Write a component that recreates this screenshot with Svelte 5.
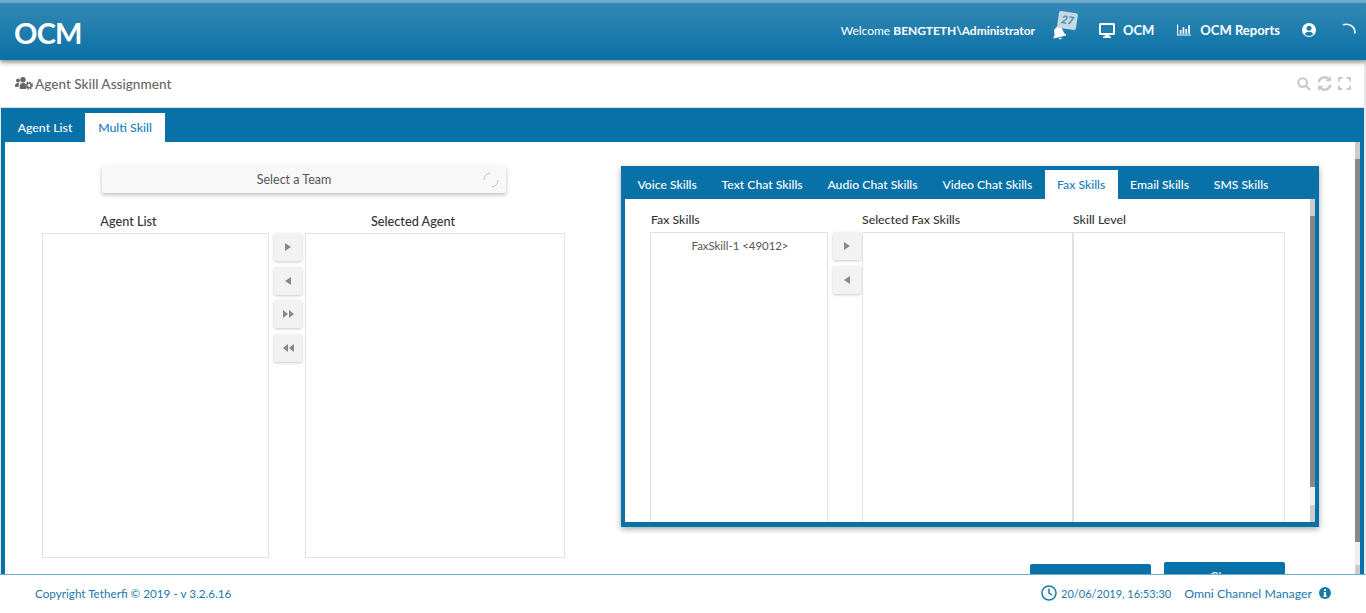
<script>
	const skill_tabs = ['Voice Skills', 'Text Chat Skills', 'Audio Chat Skills', 'Video Chat Skills', 'Fax Skills', 'Email Skills', 'SMS Skills'];
	let active_skill = $state('Fax Skills');
	let active_tab = $state('Multi Skill');

	const arrows = {
		right: 'M2 1l6 4-6 4z',
		left: 'M8 1L2 5l6 4z',
		all_right: 'M0 1l5 4-5 4zM6 1l5 4-5 4z',
		all_left: 'M5 1L0 5l5 4zM11 1L6 5l5 4z'
	};
</script>

<div class="page">
	<header class="topbar">
		<div class="logo">OCM</div>
		<nav class="top-nav">
			<span class="welcome">Welcome <b>BENGTETH\Administrator</b></span>
			<span class="bell">
				<svg width="14" height="14" viewBox="0 0 14 14" fill="#fff"><g transform="rotate(-14 7 7)"><path d="M7 0a1 1 0 0 1 1 1c2.400.4 3.500 2.300 3.500 4.500 0 2.500.8 3.500 2 4.500v1H.5v-1c1.200-1 2-2 2-4.500C2.500 3.300 3.600 1.400 6 1a1 1 0 0 1 1-1zM5.500 12h3a1.500 1.500 0 0 1-3 0z"/></g></svg>
				<span class="badge">27</span>
			</span>
			<span class="nav-item monitor">
				<svg width="16" height="15" viewBox="0 0 16 15" fill="#fff"><path d="M1.500 0h13A1.500 1.500 0 0 1 16 1.500v9a1.500 1.500 0 0 1-1.500 1.500H10l.5 1.500h1.500V15H4v-1.500h1.500L6 12H1.500A1.500 1.500 0 0 1 0 10.500v-9A1.500 1.500 0 0 1 1.500 0zM2 2v8h12V2z"/></svg>
				OCM
			</span>
			<span class="nav-item reports">
				<svg width="14" height="12" viewBox="0 0 15 12" fill="#fff"><path d="M0 0h1.200v10.800H15V12H0zM3 6h1.800v4H3zM6 3h1.800v7H6zM9 5h1.800v5H9zM12 1h1.800v9H12z"/></svg>
				OCM Reports
			</span>
			<svg class="user" width="14" height="14" viewBox="0 0 14 14"><circle cx="7" cy="7" r="7" fill="#fff"/><circle cx="7" cy="5.300" r="2.500" fill="#1a7dae"/><path d="M2.800 11.200c.8-1.800 2.400-2.500 4.200-2.500s3.400.7 4.200 2.500A6 6 0 0 1 7 13a6 6 0 0 1-4.200-1.800z" fill="#1a7dae"/></svg>
			<svg class="loader" width="14" height="14" viewBox="0 0 14 14" fill="none" stroke="#fff" stroke-width="1.600"><path d="M1 1.800C6.500 0 13.500 3 12.800 10.500"/></svg>
		</nav>
	</header>

	<div class="title-bar">
		<h1>
			<svg width="18" height="13" viewBox="0 0 18 13" fill="#666"><circle cx="3" cy="3.500" r="1.900"/><circle cx="8" cy="2.800" r="2.700"/><path d="M0 9c0-2 1-3 3-3 .8 0 1.200.2 1.600.5C3.800 7.500 3.500 8.500 3.500 10H1C.4 10 0 9.600 0 9zM4.500 11c0-3 1-5 3.500-5 1.200 0 2 .4 2.600 1.100-.2 1.500.1 3.100 1 4.700-.4.100-.9.200-1.600.2H6c-1 0-1.500-.4-1.500-1z"/><circle cx="14" cy="8.500" r="2.200" fill="none" stroke="#666" stroke-width="1.600"/><circle cx="14" cy="8.500" r="3.500" fill="none" stroke="#666" stroke-width="1.300" stroke-dasharray="1.400 1.350"/></svg>
			Agent Skill Assignment
		</h1>
		<div class="tools">
			<svg width="14" height="14" viewBox="0 0 13 13" fill="none" stroke="#c8c8c8" stroke-width="2"><circle cx="5.200" cy="5.200" r="4"/><path d="M8.200 8.200L12 12"/></svg>
			<svg width="15" height="15" viewBox="0 0 14 14" fill="none" stroke="#c8c8c8" stroke-width="2.200"><path d="M1.500 6a5.500 5.500 0 0 1 9.500-3M12.500 8a5.500 5.500 0 0 1-9.500 3"/><path d="M13 0v5H8zM1 14V9h5z" fill="#c8c8c8" stroke="none"/></svg>
			<svg width="13" height="13" viewBox="0 0 12 12" fill="none" stroke="#c8c8c8" stroke-width="1.800"><path d="M.9 4V.9H4M8 .9h3.100V4M11.100 8v3.100H8M4 11.100H.9V8"/></svg>
		</div>
	</div>

	<main class="panel">
		<div class="tabs">
			{#each ['Agent List', 'Multi Skill'] as tab}
				<button class="tab" class:active={active_tab === tab} onclick={() => (active_tab = tab)}>{tab}</button>
			{/each}
		</div>
		<div class="panel-body">
			<div class="content">
				<section class="left">
					<div class="team-select">
						Select a Team
						<svg class="spin" width="16" height="16" viewBox="0 0 16 16" fill="none" stroke-width="1"><path d="M1 8a7 7 0 0 1 6-7" stroke="#bbb"/><path d="M15 8a7 7 0 0 1-6 7" stroke="#9cc8e0"/></svg>
					</div>
					<div class="picker">
						<div class="col agents">
							<div class="label">Agent List</div>
							<div class="listbox"></div>
						</div>
						<div class="moves">
							<button class="move" aria-label="Add"><svg width="10" height="10" viewBox="0 0 10 10" fill="#888"><path d={arrows.right}/></svg></button>
							<button class="move" aria-label="Remove"><svg width="10" height="10" viewBox="0 0 10 10" fill="#888"><path d={arrows.left}/></svg></button>
							<button class="move" aria-label="Add all"><svg width="11" height="10" viewBox="0 0 11 10" fill="#888"><path d={arrows.all_right}/></svg></button>
							<button class="move" aria-label="Remove all"><svg width="11" height="10" viewBox="0 0 11 10" fill="#888"><path d={arrows.all_left}/></svg></button>
						</div>
						<div class="col selected">
							<div class="label">Selected Agent</div>
							<div class="listbox"></div>
						</div>
					</div>
				</section>

				<section class="right">
					<div class="skills-card">
						<div class="skill-tabs">
							{#each skill_tabs as tab}
								<button class="skill-tab" class:active={active_skill === tab} onclick={() => (active_skill = tab)}>{tab}</button>
							{/each}
						</div>
						<div class="skills-body">
							<div class="skills-grid">
								<div class="skill-col">
									<div class="skill-label">Fax Skills</div>
									<div class="skill-list"><div class="skill-item">FaxSkill-1 &lt;49012&gt;</div></div>
								</div>
								<div class="skill-moves">
									<button class="move" aria-label="Add skill"><svg width="10" height="10" viewBox="0 0 10 10" fill="#888"><path d={arrows.right}/></svg></button>
									<button class="move" aria-label="Remove skill"><svg width="10" height="10" viewBox="0 0 10 10" fill="#888"><path d={arrows.left}/></svg></button>
								</div>
								<div class="skill-col sel">
									<div class="skill-label">Selected Fax Skills</div>
									<div class="skill-list"></div>
								</div>
								<div class="skill-col level">
									<div class="skill-label">Skill Level</div>
									<div class="skill-list"></div>
								</div>
							</div>
							<div class="scrollbar small"><div class="cap"></div><div class="thumb"></div><div class="cap end"></div></div>
						</div>
					</div>
					<div class="actions">
						<button class="action save">Save</button>
						<button class="action clear">Clear</button>
					</div>
				</section>
			</div>
			<div class="scrollbar big"><div class="cap"></div><div class="thumb"></div><div class="cap end"></div></div>
		</div>
	</main>

	<footer class="footer">
		<span class="copy">Copyright Tetherfi © 2019 - v 3.2.6.16</span>
		<span class="status">
			<svg width="16" height="16" viewBox="0 0 16 16" fill="none" stroke="#1a78ab" stroke-width="1.500"><circle cx="8" cy="8" r="7"/><path d="M8 3.500V8l3 2"/></svg>
			<span class="stamp">20/06/2019, 16:53:30</span>
			<span class="app-name">Omni Channel Manager</span>
			<svg width="12" height="12" viewBox="0 0 12 12"><circle cx="6" cy="6" r="6" fill="#1a78ab"/><path d="M5 2.200h2v1.800H5zM4.600 5h2.400v3.600h.6V10H4.400V8.600H5V6.300h-.4z" fill="#fff"/></svg>
		</span>
	</footer>
</div>

<style>
	:global(body) {
		margin: 0;
		background: #fff;
		font-family: Lato, "Open Sans", sans-serif;
	}

	.page {
		width: 1366px;
		height: 613px;
		display: flex;
		flex-direction: column;
		overflow: hidden;
		color: #444;
		background: #e8e8e8;
	}

	button {
		font: inherit;
		border: 0;
		cursor: pointer;
	}

	.topbar {
		flex: none;
		height: 57px;
		display: flex;
		align-items: center;
		justify-content: space-between;
		border-top: 3px solid #6fa9c9;
		background: linear-gradient(180deg, #3389b4 0%, #0a70a6 100%);
		box-shadow: 0 2px 5px rgba(0, 0, 0, 0.5);
		color: #fff;
		position: relative;
		z-index: 2;
	}

	.logo {
		margin: 1px 0 0 14px;
		font-size: 29px;
		font-weight: 700;
		letter-spacing: -0.8px;
	}

	.top-nav {
		display: flex;
		align-items: center;
		font-size: 13px;
		margin-top: -3px;
	}

	.welcome {
		font-size: 12px;
	}

	.welcome b {
		font-weight: 700;
		letter-spacing: -0.05px;
	}

	.bell {
		position: relative;
		display: flex;
		margin: 6px 0 0 17px;
	}

	.badge {
		position: absolute;
		left: 6px;
		top: -14px;
		width: 19px;
		height: 17px;
		border-radius: 2px;
		background: #c5d9e6;
		color: #4d87aa;
		font-size: 11px;
		font-style: italic;
		font-weight: 700;
		line-height: 16px;
		text-align: center;
		transform: rotate(8deg);
	}

	.nav-item {
		display: flex;
		align-items: center;
		gap: 8px;
		font-weight: 700;
		font-size: 13px;
	}

	.monitor {
		margin-left: 33px;
	}

	.reports {
		margin-left: 23px;
		gap: 9px;
	}

	.user {
		margin-left: 22px;
	}

	.loader {
		margin: 0 10px 0 26px;
	}

	.title-bar {
		flex: none;
		height: 48px;
		display: flex;
		align-items: center;
		justify-content: space-between;
		margin-right: 2px;
		padding: 0 13px 0 15px;
		background: #fff;
		border-bottom: 1px solid #ddd;
		box-sizing: border-box;
	}

	h1 {
		margin: 0;
		display: flex;
		align-items: center;
		gap: 2px;
		font-size: 13.600px;
		font-weight: 500;
		color: #666;
	}

	.tools {
		display: flex;
		align-items: center;
		gap: 6px;
	}

	.panel {
		flex: 1;
		min-height: 0;
		display: flex;
		flex-direction: column;
		margin: 0 2px 0 1px;
		padding: 5px 4px 0;
		background: #0872a8;
		overflow: hidden;
	}

	.tabs {
		display: flex;
		flex: none;
		height: 29px;
	}

	.tab {
		width: 80px;
		padding: 0;
		background: transparent;
		color: #fff;
		font-size: 12.300px;
		font-weight: 500;
	}

	.tab.active {
		background: #fff;
		color: #1380bd;
	}

	.panel-body {
		flex: 1;
		min-height: 0;
		display: flex;
	}

	.content {
		flex: 1;
		display: flex;
		background: #fff;
	}

	.left {
		width: 616px;
		flex: none;
		padding: 23px 0 0 37px;
		box-sizing: border-box;
	}

	.team-select {
		position: relative;
		width: 404px;
		height: 28px;
		margin-left: 60px;
		background: #f8f8f8;
		border-radius: 2px;
		box-shadow: 0 2px 4px rgba(0, 0, 0, 0.25);
		font-size: 12.500px;
		line-height: 30px;
		text-align: center;
		color: #555;
		box-sizing: border-box;
		padding-right: 20px;
	}

	.spin {
		position: absolute;
		right: 7px;
		top: 7px;
	}

	.picker {
		display: flex;
		margin-top: 20px;
	}

	.label {
		height: 20px;
		text-align: center;
		font-size: 12.700px;
		font-weight: 500;
		color: #333;
	}

	.agents .label {
		padding-right: 54px;
	}

	.selected .label {
		padding-right: 44px;
	}

	.col {
		display: flex;
		flex-direction: column;
	}

	.agents {
		width: 227px;
	}

	.selected {
		width: 260px;
	}

	.listbox {
		height: 325px;
		border: 1px solid #e2e2e2;
		box-sizing: border-box;
	}

	.moves {
		width: 36px;
		padding: 20px 3px 0 5px;
		box-sizing: border-box;
		display: flex;
		flex-direction: column;
		gap: 5.500px;
	}

	.move {
		width: 28px;
		height: 28px;
		padding: 0;
		display: flex;
		align-items: center;
		justify-content: center;
		background: #f2f2f2;
		border-radius: 2px;
		box-shadow: 0 1px 3px rgba(0, 0, 0, 0.22);
	}

	.right {
		flex: none;
		width: 698px;
		padding-top: 24px;
		box-sizing: border-box;
	}

	.skills-card {
		height: 361px;
		display: flex;
		flex-direction: column;
		padding: 4px 4px 5px;
		box-sizing: border-box;
		background: #0872a8;
		box-shadow: 0 2px 6px rgba(0, 0, 0, 0.35);
	}

	.skill-tabs {
		flex: none;
		height: 29px;
		display: flex;
	}

	.skill-tab {
		padding: 0 12.400px;
		background: transparent;
		color: #fff;
		font-size: 12.200px;
		font-weight: 500;
		white-space: nowrap;
	}

	.skill-tab.active {
		background: #fff;
		color: #1380bd;
	}

	.skills-body {
		flex: 1;
		min-height: 0;
		display: flex;
		background: #fff;
	}

	.skills-grid {
		flex: 1;
		display: flex;
		padding-left: 25px;
	}

	.skill-col {
		display: flex;
		flex-direction: column;
	}

	.skill-col:first-child {
		width: 178px;
	}

	.skill-col:first-child .skill-label {
		padding-left: 1px;
	}

	.skill-col.sel {
		width: 211px;
	}

	.skill-col.level {
		width: 212px;
	}

	.skill-label {
		height: 33px;
		line-height: 41px;
		font-size: 12.300px;
		font-weight: 500;
		color: #333;
	}

	.skill-list {
		flex: 1;
		border: 1px solid #e2e2e2;
		border-bottom: 0;
		box-sizing: border-box;
		font-size: 11.400px;
		color: #555;
	}

	.skill-item {
		padding: 5px 0 0 2px;
		text-align: center;
		line-height: 16px;
	}

	.skill-moves {
		width: 34px;
		padding: 33px 0 0 5px;
		box-sizing: border-box;
		display: flex;
		flex-direction: column;
		gap: 5.500px;
	}

	.scrollbar {
		flex: none;
		width: 5px;
		display: flex;
		flex-direction: column;
		background: #eee;
	}

	.scrollbar .thumb {
		background: #888;
	}

	.cap {
		flex: none;
		height: 17px;
		background: #ccc;
	}

	.cap.end {
		margin-top: auto;
	}

	.small .thumb {
		height: 271px;
	}

	.big .thumb {
		height: 383px;
	}

	.big .cap.end {
		height: 9px;
	}

	.actions {
		display: flex;
		gap: 13px;
		margin: 35px 0 0 409px;
		align-items: flex-start;
	}

	.action {
		width: 121px;
		height: 30px;
		background: #0872a8;
		color: #fff;
		font-size: 13px;
		border-radius: 2px;
	}

	.action.save {
		margin-top: 2px;
	}

	.footer {
		flex: none;
		height: 39px;
		display: flex;
		align-items: center;
		justify-content: space-between;
		padding: 0 35px 2px;
		border-top: 1px solid #6badd1;
		box-sizing: border-box;
		background: #fff;
		color: #1a78ab;
		font-size: 11.700px;
		position: relative;
	}

	.status {
		display: flex;
		align-items: center;
	}

	.stamp {
		margin-left: 4px;
		font-size: 11px;
	}

	.app-name {
		margin: 0 7px 0 13px;
		font-size: 12.300px;
	}
</style>
